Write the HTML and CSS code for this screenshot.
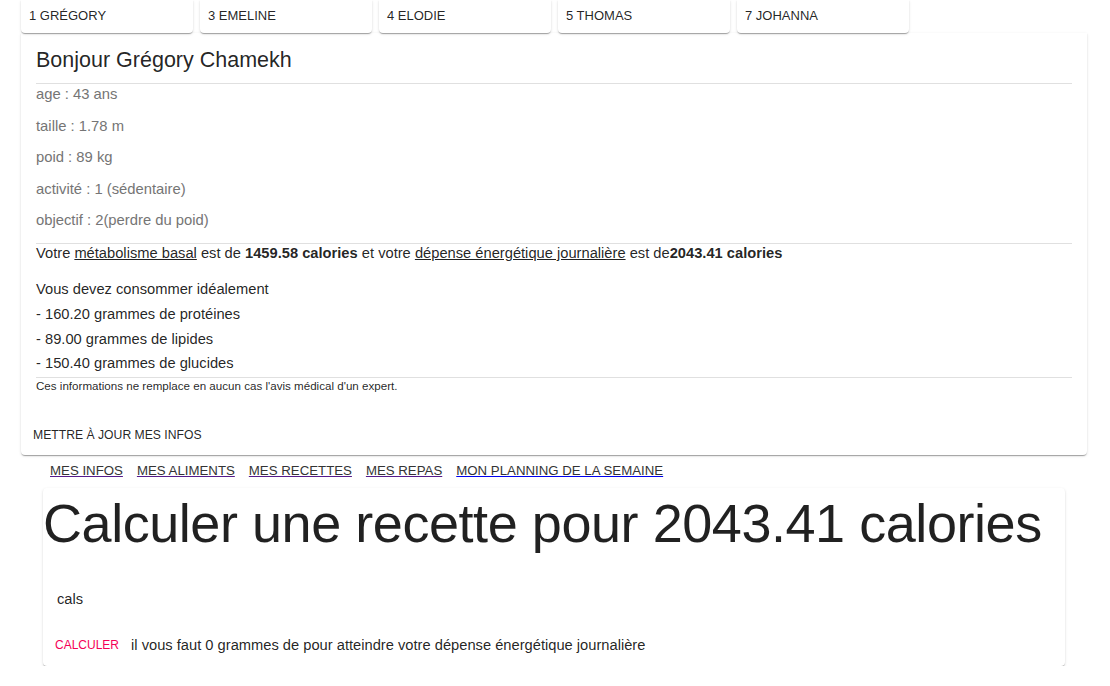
FILE: index.html
```html
<!DOCTYPE html>
<html lang="fr">
<head>
<meta charset="utf-8">
<title>Nutrition</title>
<link rel="stylesheet" href="styles.css">
</head>
<body>
<div class="page">
  <div class="tabs">
    <div class="tab">1 Grégory</div>
    <div class="tab">3 Emeline</div>
    <div class="tab">4 Elodie</div>
    <div class="tab">5 Thomas</div>
    <div class="tab">7 Johanna</div>
  </div>

  <div class="card profile">
    <div class="profile-body">
      <h2 class="title">Bonjour Grégory Chamekh</h2>
      <hr class="sep">
      <div class="facts">
        <div class="fact">age : 43 ans</div>
        <div class="fact">taille : 1.78 m</div>
        <div class="fact">poid : 89 kg</div>
        <div class="fact">activité : 1 (sédentaire)</div>
        <div class="fact">objectif : 2(perdre du poid)</div>
      </div>
      <hr class="sep sep-b">
      <div class="summary">Votre <span class="ul">métabolisme basal</span> est de <b>1459.58 calories</b> et votre <span class="ul">dépense énergétique journalière</span> est de<b>2043.41 calories</b></div>
      <div class="macros">
        <div>Vous devez consommer idéalement</div>
        <div>- 160.20 grammes de protéines</div>
        <div>- 89.00 grammes de lipides</div>
        <div>- 150.40 grammes de glucides</div>
      </div>
      <hr class="sep">
      <div class="disclaimer">Ces informations ne remplace en aucun cas l'avis médical d'un expert.</div>
    </div>
    <div class="actions">
      <button class="btn">Mettre à jour mes infos</button>
    </div>
  </div>

  <nav class="nav">
    <a href="#" class="visited">Mes infos</a>
    <a href="#" class="visited">Mes aliments</a>
    <a href="#" class="visited">Mes recettes</a>
    <a href="#" class="visited">Mes repas</a>
    <a href="#" class="fresh">Mon planning de la semaine</a>
  </nav>

  <div class="card recipe">
    <h1 class="big">Calculer une recette pour 2043.41 calories</h1>
    <div class="cals">cals</div>
    <div class="calc-row">
      <button class="btn btn-pink">Calculer</button>
      <span>il vous faut 0 grammes de pour atteindre votre dépense énergétique journalière</span>
    </div>
  </div>
</div>
</body>
</html>
```

FILE: styles.css
```css
* { box-sizing: border-box; }

html, body {
  margin: 0;
  padding: 0;
  background: #fff;
}

body {
  font-family: "Liberation Sans", Arial, Helvetica, sans-serif;
  color: rgba(0, 0, 0, 0.87);
}

.page {
  padding: 0 23px 0 21px;
}

.card {
  background: #fff;
  border-radius: 4px;
  box-shadow: 0 2px 1px -1px rgba(0,0,0,0.2), 0 1px 1px 0 rgba(0,0,0,0.14), 0 1px 3px 0 rgba(0,0,0,0.12);
}

/* tabs */
.tabs {
  display: flex;
  gap: 7px;
  height: 33px;
}

.tab {
  width: 172px;
  height: 33px;
  background: #fff;
  border-radius: 0 0 4px 4px;
  box-shadow: 0 2px 1px -1px rgba(0,0,0,0.2), 0 1px 1px 0 rgba(0,0,0,0.14), 0 1px 3px 0 rgba(0,0,0,0.12);
  font-size: 13px;
  text-transform: uppercase;
  padding: 0 8px;
  line-height: 31px;
  color: rgba(0,0,0,0.87);
}

/* profile card */
.profile {
  border-radius: 0 0 4px 4px;
}

.profile-body {
  padding: 14px 15px 0 15px;
}

.title {
  margin: 0;
  font-size: 21.5px;
  font-weight: 400;
  line-height: 26px;
  padding-bottom: 10px;
}

.sep {
  margin: 0;
  border: 0;
  border-top: 1px solid #e0e0e0;
  height: 0;
}

.facts {
  display: flex;
  flex-direction: column;
  gap: 11.6px;
  padding-bottom: 12.5px;
}

.fact {
  font-size: 14.8px;
  line-height: 20px;
  color: #757575;
}

.summary {
  font-size: 14.7px;
  line-height: 18px;
}

.summary b { font-weight: 700; }

.ul { text-decoration: underline; }

.macros {
  margin-top: 15.5px;
  font-size: 14.7px;
  line-height: 24.7px;
  padding-bottom: 1px;
}

.disclaimer {
  font-size: 11.6px;
  line-height: 13px;
  padding-top: 1px;
}

.actions {
  padding: 25px 4px 2px 4px;
}

.btn {
  font-family: "Liberation Sans", Arial, Helvetica, sans-serif;
  background: none;
  border: 0;
  border-radius: 4px;
  text-transform: uppercase;
  font-size: 12.2px;
  color: rgba(0,0,0,0.87);
  padding: 6px 8px;
  line-height: 24px;
  cursor: pointer;
}

/* nav */
.nav {
  display: flex;
  gap: 14px;
  padding: 8px 0 0 29px;
  height: 33px;
  line-height: 16px;
}

.nav a {
  font-size: 13.25px;
  text-transform: uppercase;
  color: #333;
}

.nav a.visited { text-decoration-color: #551a8b; }
.nav a.fresh { text-decoration-color: #0000ee; }

/* recipe card */
.recipe {
  margin: 0 0 0 22px;
  width: 1022px;
  padding-bottom: 3px;
}

.big {
  margin: 0;
  font-size: 54px;
  letter-spacing: -0.45px;
  font-weight: 400;
  line-height: 70px;
  white-space: nowrap;
}

.cals {
  font-size: 14.7px;
  line-height: 18px;
  padding: 32px 14px 0;
}

.calc-row {
  display: flex;
  align-items: center;
  gap: 4px;
  padding: 19px 4px 0 4px;
  font-size: 14.7px;
}

.btn-pink {
  color: #f50057;
  font-size: 12px;
}
```
